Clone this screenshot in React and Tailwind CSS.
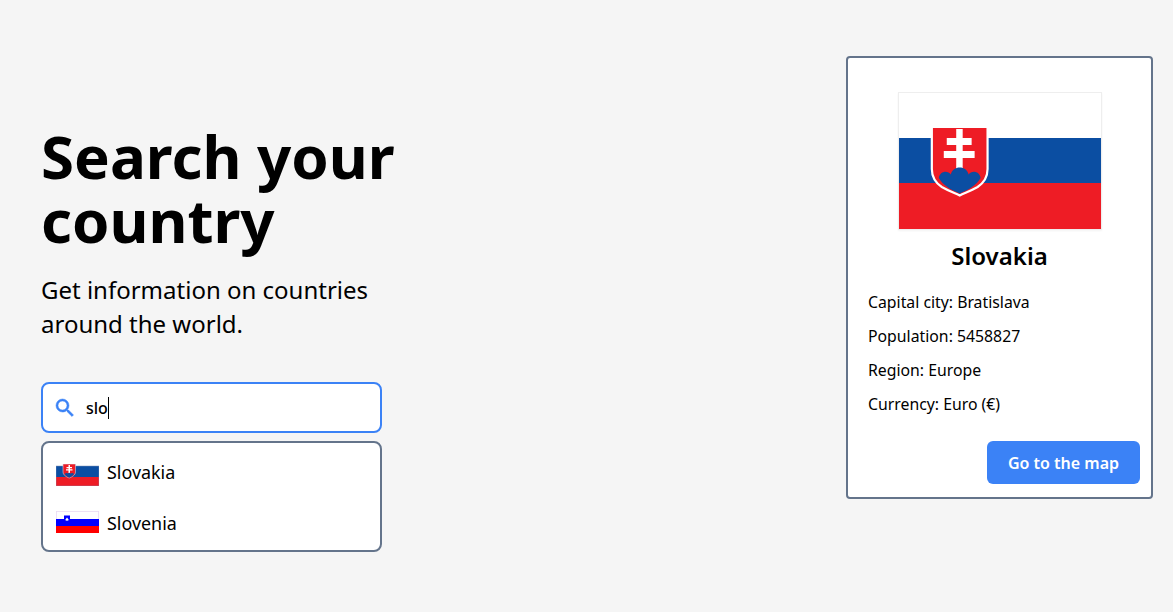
const font = { fontFamily: '"Noto Sans", sans-serif' };

function Shield() {
  return (
    <>
      <path d="M33 34H89V76C89 85 85 90 79 94C72 98 66 100 61 102.500C56 100 50 98 43 94C37 90 33 85 33 76Z" fill="#ee1c25" stroke="#fff" strokeWidth="2.200" />
      <path d="M57.500 36H64V45H73V52H64V58H76V65H64V76H57.500V65H45V58H57.500V52H48V45H57.500Z" fill="#fff" />
      <path d="M40 85C41 78 49 77 52 81.500C54 72 68 72 70 81.500C73 77 81 78 82 85C78 92 70 97 61 100.500C52 97 44 92 40 85Z" fill="#0b4ea2" />
    </>
  );
}

function SkFlag({ className }) {
  return (
    <svg viewBox="0 0 203 136" className={className} preserveAspectRatio="none">
      <rect width="203" height="45" fill="#ffffff" />
      <rect y="45" width="203" height="45" fill="#0b4ea2" />
      <rect y="90" width="203" height="46" fill="#ee1c25" />
      <Shield />
    </svg>
  );
}

function SkSmall() {
  return (
    <svg viewBox="0 0 43 22" className="w-[43px] h-[22px] shrink-0 mt-[4px]">
      <rect y="2" width="43" height="11" fill="#0b4ea2" />
      <rect y="13" width="43" height="9" fill="#ee1c25" />
      <rect x="0" y="2" width="43" height="20" fill="none" stroke="#7f93b8" strokeWidth="0.500" />
      <path d="M7 0H19.500V8C19.500 11 16 13 13.250 14C10.500 13 7 11 7 8Z" fill="#ee1c25" stroke="#c9d3e6" strokeWidth="0.600" />
      <path d="M12.500 1H14V3H16V4.300H14V5.300H16.500V6.600H14V9H12.500V6.600H10V5.300H12.500V4.300H10.500V3H12.500Z" fill="#fff" />
      <path d="M8.500 10C10 8.500 11.500 9 12 9.500C13 8.500 14 8.500 14.500 9.500C15.500 9 17 8.500 18 10C16.500 12 15 13 13.250 13.500C11.500 13 10 12 8.500 10Z" fill="#0b4ea2" />
    </svg>
  );
}

function SiFlag() {
  return (
    <svg viewBox="0 0 43 22" className="w-[43px] h-[22px] shrink-0 -mt-[3px]">
      <rect width="43" height="8" fill="#ffffff" />
      <rect y="8" width="43" height="7" fill="#0000ff" />
      <rect y="15" width="43" height="7" fill="#ff0000" />
      <path d="M.300 8V.300H42.700V8" fill="none" stroke="#e0c8ee" strokeWidth="0.700" />
      <path d="M8 4.500H14V9C14 10.500 12.500 11.500 11 12C9.500 11.500 8 10.500 8 9Z" fill="#0000ff" />
      <path d="M9.200 9L11 6.500L12.800 9C12 10 10 10 9.200 9Z" fill="#fff" />
    </svg>
  );
}

function Row({ flag, name }) {
  return (
    <div className="flex items-center h-[51px] px-[13px]">
      {flag}
      <span className="ml-[8px] text-[17.900px] text-black">{name}</span>
    </div>
  );
}

export default function App() {
  return (
    <div style={font} className="h-[612px] bg-[#f5f5f5] flex justify-between overflow-hidden">
      <div className="pl-[41px] pt-[124px] w-[440px]">
        <h1 className="text-[60px] leading-[64px] font-bold text-black w-[400px]">Search your country</h1>
        <p className="mt-[21px] text-[24px] leading-[34px] text-black w-[350px]">Get information on countries around the world.</p>
        <div className="mt-[41px] w-[341px] h-[51px] rounded-lg border-2 border-[#3b82f6] bg-white flex items-center pl-[10px]">
          <svg viewBox="0 0 24 24" className="w-[24px] h-[24px] fill-[#3b82f6] stroke-[#3b82f6] stroke-[0.5]">
            <path d="M15.500 14h-.79l-.28-.27A6.471 6.471 0 0 0 16 9.500 6.500 6.500 0 1 0 9.500 16c1.610 0 3.090-.59 4.230-1.570l.27.28v.79l5 4.990L20.490 19l-4.990-5zm-6 0C7.010 14 5 11.990 5 9.500S7.010 5 9.500 5 14 7.010 14 9.500 11.990 14 9.500 14z" />
          </svg>
          <span className="ml-[9px] text-[16px] font-medium text-black">slo</span>
          <span className="w-px h-[22px] bg-black" />
        </div>
        <div className="mt-[8px] w-[341px] h-[111px] rounded-lg border-2 border-[#64748b] bg-white pt-[4px]">
          <Row flag={<SkSmall />} name="Slovakia" />
          <Row flag={<SiFlag />} name="Slovenia" />
        </div>
      </div>
      <div className="mt-[56px] mr-[20px] w-[307px] h-[443px] rounded border-2 border-[#64748b] bg-white flex flex-col">
        <div className="flex justify-center pt-[34px] pl-px">
          <div className="border border-[#eeeeee] w-[204px] h-[138px] shadow-[0_1px_2px_rgba(0,0,0,0.05)]">
            <SkFlag className="w-full h-full block" />
          </div>
        </div>
        <h2 className="mt-[10px] text-center text-[24px] leading-[32px] font-semibold text-black">Slovakia</h2>
        <div className="mt-[18px] px-[20px] text-[15.800px] leading-[24px] text-black flex flex-col gap-[10px]">
          <p>Capital city: Bratislava</p>
          <p>Population: 5458827</p>
          <p>Region: Europe</p>
          <p>Currency: Euro (€)</p>
        </div>
        <div className="mt-auto flex justify-end pr-[11px] pb-[13px]">
          <button className="w-[153px] h-[43px] rounded-md bg-[#3b82f6] text-white font-semibold text-[16px]">Go to the map</button>
        </div>
      </div>
    </div>
  );
}
